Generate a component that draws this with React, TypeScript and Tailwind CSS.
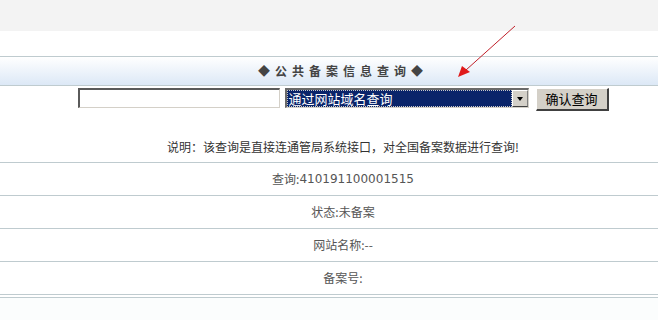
const font = { fontFamily: '"Noto Sans CJK SC", "Liberation Sans", sans-serif' };

const Row = ({ children }: { children: React.ReactNode }) => (
  <div className="h-[33px] flex items-center justify-center text-[12px] text-[#555] border-b border-[#bfcbcf]">
    {children}
  </div>
);

const App = () => {
  return (
    <div className="relative w-[658px] h-[320px] overflow-hidden bg-white" style={font}>
      <div className="h-[31px] bg-[#f3f3f3]" />
      <div className="w-[686px]">
        <div className="h-[26px] border-b border-[#bfcbcf]" />

        {/* title bar */}
        <div className="h-[29px] border-b border-[#bfcbcf] bg-gradient-to-b from-white to-[#dce8f6] flex items-center justify-center">
          <span className="text-[12px] font-bold text-[#444] tracking-[5px]">◆公共备案信息查询◆</span>
        </div>

        {/* search form */}
        <div className="h-[25px] flex justify-center items-start pt-[2px]">
          <div className="w-[202px] h-[20px] border-t-2 border-l-2 border-t-[#5a5a5a] border-l-[#5a5a5a] border-b border-r border-b-[#d4d0c8] border-r-[#d4d0c8] bg-white" />
          <div className="ml-[5px] w-[244px] h-[20px] border-t-2 border-l-2 border-t-[#6a6a6a] border-l-[#6a6a6a] border-b border-r border-b-[#d4d0c8] border-r-[#d4d0c8] flex bg-white">
            <div className="flex-1 bg-[#0a246a] border border-dotted border-[#c8c8c8] flex items-center overflow-hidden">
              <span className="text-[13px] leading-[15px] text-white pl-[1px] whitespace-nowrap">通过网站域名查询</span>
            </div>
            <div className="w-[16px] bg-[#d4d0c8] border-t border-l border-t-white border-l-white border-b border-r border-b-[#404040] border-r-[#808080] flex items-center justify-center">
              <div className="w-0 h-0 border-l-[3.5px] border-r-[3.5px] border-t-[4px] border-l-transparent border-r-transparent border-t-black" />
            </div>
          </div>
          <div className="ml-[7px] w-[73px] h-[23px] bg-[#d4d0c8] border-t border-l border-t-white border-l-white border-b-2 border-r-2 border-b-[#404040] border-r-[#404040] flex items-center justify-center">
            <span className="text-[13px] text-black">确认查询</span>
          </div>
        </div>

        <div className="h-[52px] flex items-end justify-center pb-[6px] border-b border-[#bfcbcf]">
          <span className="text-[12px] text-[#333]">说明：该查询是直接连通管局系统接口，对全国备案数据进行查询!</span>
        </div>

        <Row>
          查询:<span style={{ fontFamily: '"DejaVu Sans", sans-serif' }} className="text-[12px]">410191100001515</span>
        </Row>
        <Row>状态:未备案</Row>
        <Row>网站名称:--</Row>
        <Row>备案号:</Row>
        <div className="h-[2px]" />
        <div className="border-t border-[#bfcbcf] h-[24px] bg-[#fbfdfd]" />
      </div>

      {/* red arrow pointing at the select */}
      <svg className="absolute left-0 top-0 pointer-events-none" width="658" height="320">
        <line x1="515" y1="26" x2="466" y2="70" stroke="#c0202a" strokeWidth="1" />
        <polygon points="458,77 462,66 470,72" fill="#e01a1a" />
      </svg>
    </div>
  );
};

export default App;
